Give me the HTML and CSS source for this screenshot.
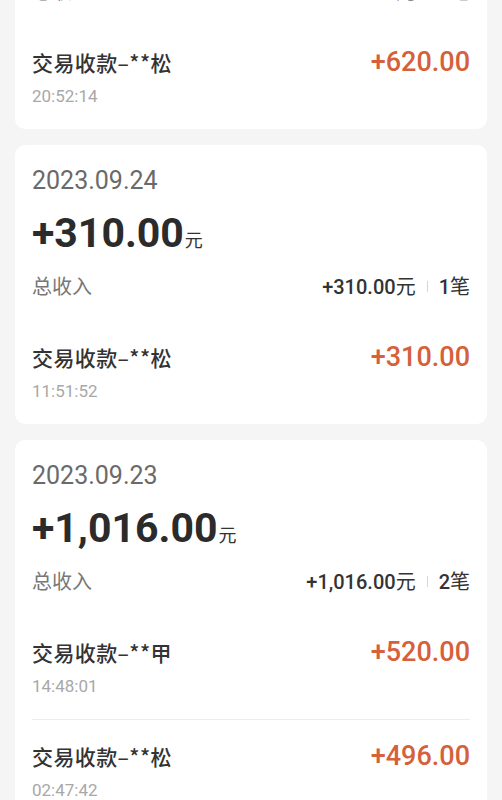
FILE: index.html
```html
<!DOCTYPE html>
<html lang="zh-CN">
<head>
<meta charset="utf-8">
<title>收款记录</title>
<link rel="stylesheet" href="styles.css">
</head>
<body>
<main class="list">
  <section class="card">
    <div class="day-head">
      <div class="date">2023.09.25</div>
      <div class="total"><span class="total-num">+620.00</span><span class="unit">元</span></div>
      <div class="summary">
        <span class="summary-label">总收入</span>
        <span class="summary-stat"><span class="num">+620.00</span><span class="cjk">元</span><span class="sep"></span><span class="num">1</span><span class="cjk">笔</span></span>
      </div>
    </div>
    <div class="txn">
      <div class="txn-info">
        <div class="txn-name">交易收款–**松</div>
        <div class="txn-time">20:52:14</div>
      </div>
      <div class="txn-amount">+620.00</div>
    </div>
  </section>

  <section class="card">
    <div class="day-head">
      <div class="date">2023.09.24</div>
      <div class="total"><span class="total-num">+310.00</span><span class="unit">元</span></div>
      <div class="summary">
        <span class="summary-label">总收入</span>
        <span class="summary-stat"><span class="num">+310.00</span><span class="cjk">元</span><span class="sep"></span><span class="num">1</span><span class="cjk">笔</span></span>
      </div>
    </div>
    <div class="txn">
      <div class="txn-info">
        <div class="txn-name">交易收款–**松</div>
        <div class="txn-time">11:51:52</div>
      </div>
      <div class="txn-amount">+310.00</div>
    </div>
  </section>

  <section class="card">
    <div class="day-head">
      <div class="date">2023.09.23</div>
      <div class="total"><span class="total-num">+1,016.00</span><span class="unit">元</span></div>
      <div class="summary">
        <span class="summary-label">总收入</span>
        <span class="summary-stat"><span class="num">+1,016.00</span><span class="cjk">元</span><span class="sep"></span><span class="num">2</span><span class="cjk">笔</span></span>
      </div>
    </div>
    <div class="txn">
      <div class="txn-info">
        <div class="txn-name">交易收款–**甲</div>
        <div class="txn-time">14:48:01</div>
      </div>
      <div class="txn-amount">+520.00</div>
    </div>
    <div class="txn">
      <div class="txn-info">
        <div class="txn-name">交易收款–**松</div>
        <div class="txn-time">02:47:42</div>
      </div>
      <div class="txn-amount">+496.00</div>
    </div>
  </section>
</main>
</body>
</html>
```
FILE: styles.css
```css
html, body {
  margin: 0;
  background: #f5f5f5;
  font-family: "Noto Sans CJK SC", sans-serif;
}

.list {
  display: flex;
  flex-direction: column;
  gap: 16px;
  padding: 0 15px 16px;
  margin-top: -150px;
}

.card {
  background: #ffffff;
  border-radius: 10px;
  padding: 0 17px;
}

.day-head {
  padding: 21px 0 21px;
}

.date {
  font-family: Roboto, sans-serif;
  font-weight: 400;
  font-size: 25px;
  line-height: 30px;
  color: #6a6a6a;
}

.total {
  margin-top: 13px;
  display: flex;
  align-items: baseline;
  height: 48px;
  color: #2b2b2b;
}

.total-num {
  font-family: Roboto, sans-serif;
  font-weight: 700;
  font-size: 41px;
  line-height: 48px;
}

.unit {
  font-family: "Noto Sans CJK SC", sans-serif;
  font-size: 18px;
  line-height: 24px;
  margin-left: 1px;
  color: #333333;
}

.summary {
  margin-top: 15px;
  height: 28px;
  display: flex;
  justify-content: space-between;
  align-items: baseline;
}

.summary-label {
  font-size: 20px;
  line-height: 28px;
  color: #777777;
}

.summary-stat {
  display: flex;
  align-items: baseline;
  color: #333333;
}

.summary-stat .num {
  font-family: Roboto, sans-serif;
  font-weight: 500;
  font-size: 20px;
  line-height: 28px;
}

.summary-stat .cjk {
  font-family: "Noto Sans CJK SC", sans-serif;
  font-size: 20px;
  line-height: 28px;
}

.sep {
  align-self: center;
  width: 1px;
  height: 11px;
  background: #d6d6d6;
  margin: 0 11px 0 11px;
}

.txn {
  display: flex;
  justify-content: space-between;
  align-items: flex-start;
  padding: 22px 0;
}

.txn + .txn {
  border-top: 1px solid #ededed;
}

.txn-name {
  font-size: 21px;
  font-weight: 500;
  line-height: 28px;
  letter-spacing: 0.4px;
  color: #333333;
}

.txn-time {
  margin-top: 9px;
  font-family: Roboto, sans-serif;
  font-size: 17px;
  line-height: 22px;
  color: #a8a8a8;
}

.txn-amount {
  font-family: Roboto, sans-serif;
  font-weight: 500;
  font-size: 27px;
  line-height: 28px;
  color: #d5603a;
}
```
